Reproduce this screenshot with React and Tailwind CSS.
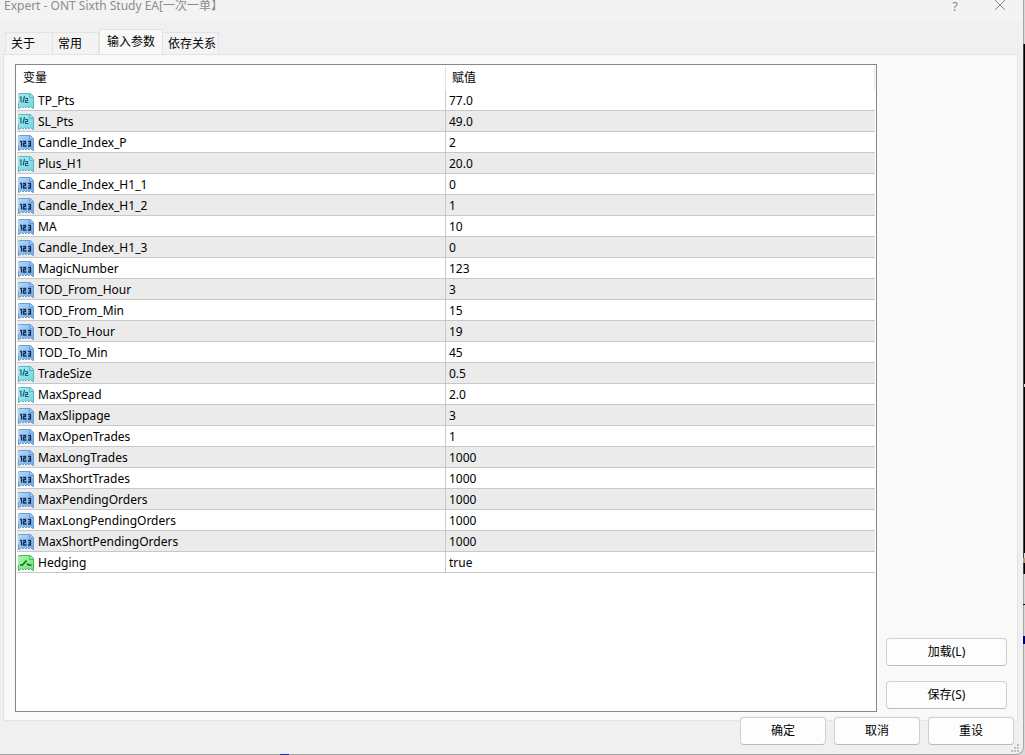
import React, { useState } from 'react'
import clsx from 'clsx'

const TABS = [
  { id: 'about', label: '关于', width: 'w-12' },
  { id: 'common', label: '常用', width: 'w-[46px]' },
  { id: 'inputs', label: '输入参数', width: 'w-16' },
  { id: 'deps', label: '依存关系', width: 'w-14' },
]

const INPUTS = [
  { name: 'TP_Pts', value: '77.0', type: 'double' },
  { name: 'SL_Pts', value: '49.0', type: 'double' },
  { name: 'Candle_Index_P', value: '2', type: 'int' },
  { name: 'Plus_H1', value: '20.0', type: 'double' },
  { name: 'Candle_Index_H1_1', value: '0', type: 'int' },
  { name: 'Candle_Index_H1_2', value: '1', type: 'int' },
  { name: 'MA', value: '10', type: 'int' },
  { name: 'Candle_Index_H1_3', value: '0', type: 'int' },
  { name: 'MagicNumber', value: '123', type: 'int' },
  { name: 'TOD_From_Hour', value: '3', type: 'int' },
  { name: 'TOD_From_Min', value: '15', type: 'int' },
  { name: 'TOD_To_Hour', value: '19', type: 'int' },
  { name: 'TOD_To_Min', value: '45', type: 'int' },
  { name: 'TradeSize', value: '0.5', type: 'double' },
  { name: 'MaxSpread', value: '2.0', type: 'double' },
  { name: 'MaxSlippage', value: '3', type: 'int' },
  { name: 'MaxOpenTrades', value: '1', type: 'int' },
  { name: 'MaxLongTrades', value: '1000', type: 'int' },
  { name: 'MaxShortTrades', value: '1000', type: 'int' },
  { name: 'MaxPendingOrders', value: '1000', type: 'int' },
  { name: 'MaxLongPendingOrders', value: '1000', type: 'int' },
  { name: 'MaxShortPendingOrders', value: '1000', type: 'int' },
  { name: 'Hedging', value: 'true', type: 'bool' },
]

const ICON_COLORS = {
  int: { light: '#b8dcfc', dark: '#6ea6e2', edge: '#6b9fd6', ink: '#12305c' },
  double: { light: '#a9eef5', dark: '#74d2df', edge: '#5cb6c4', ink: '#1c6674' },
  bool: { light: '#aaf8aa', dark: '#72de7a', edge: '#4dbb59', ink: '#14651f' },
}

// Torn-paper tag, the mark on it tells the variable's type
function TypeIcon({ type }) {
  const c = ICON_COLORS[type]
  return (
    <svg className="h-4 w-4 shrink-0" viewBox="0 0 16 16" fill="none" aria-hidden="true">
      <defs>
        <linearGradient id={`tag-${type}`} x1="0" y1="0" x2="1" y2="1">
          <stop offset="0" stopColor={c.light} />
          <stop offset="1" stopColor={c.dark} />
        </linearGradient>
      </defs>
      <path
        d="M1.5 .5h11l3 3v12l-1.5-.5-1.5-1.5-1.5 1.5-1.5-1.5-1.5 1.5-1.5-1.5-1.5 1.5-1.5-1.5-1.5 1.5-1.5.5v-5l-1-1v-8z"
        fill={`url(#tag-${type})`}
        stroke={c.edge}
      />
      <path d="M11.5 1v3.5h3.5" stroke={c.edge} />
      {type === 'int' && (
        <path
          d="M2 6.5h1.5v5M5 6.5h2.5v2h-2v2.5h3M10 6.5h2.5v5M10 11h3M10.5 8.8h2"
          stroke={c.ink}
          strokeWidth="1.3"
        />
      )}
      {type === 'double' && (
        <path
          d="M1.5 4h1.5v5.5M6.5 3l-1.5 6.5M7 5.5h2.5v2h-2v2h3"
          stroke={c.ink}
          strokeWidth="1.2"
        />
      )}
      {type === 'bool' && (
        <path d="M2 10h2.5l4-4.5M9 8.5l1.5 1.5h3" stroke={c.ink} strokeWidth="1.5" />
      )}
    </svg>
  )
}

function TitleBar() {
  return (
    <header className="flex h-[21px] shrink-0 items-start bg-[#f3f3f3] pl-1 pr-[17px] text-[#8c8c8c]">
      <h1 className="flex-1 text-[12px] leading-3">Expert - ONT Sixth Study EA[一次一单】</h1>
      <button aria-label="帮助" className="mr-9 text-[13px] leading-3">?</button>
      <button aria-label="关闭" className="h-3">
        <svg className="h-3 w-3" viewBox="0 0 12 12" fill="none" stroke="currentColor">
          <path d="M1 0l10 10M11 0L1 10" />
        </svg>
      </button>
    </header>
  )
}

function Tab({ label, width, active, onClick }) {
  return (
    <button
      role="tab"
      aria-selected={active}
      onClick={onClick}
      className={clsx(
        'border-t border-r border-[#e3e3e3] text-left text-[12px] first:border-l',
        width,
        active ? 'h-[25px] border-l bg-[#f9f9f9] pl-[7px]' : 'h-[22px] bg-[#f3f3f3] pl-[5px]'
      )}
    >
      {label}
    </button>
  )
}

function InputsTable() {
  return (
    <div className="min-w-0 flex-1 border border-[#828790] bg-white px-px pt-px">
      <table className="w-full table-fixed border-separate border-spacing-0 text-[12px] leading-4">
        <thead>
          <tr className="h-6 text-left">
            <th className="border-r border-[#e5e5e5] p-0 pl-1.5 font-normal">变量</th>
            <th className="border-r border-[#e5e5e5] p-0 pl-1.5 font-normal">赋值</th>
          </tr>
        </thead>
        <tbody>
          {INPUTS.map((row) => (
            <tr key={row.name} className="h-[21px] even:bg-[#ebebeb]">
              <td className="border-b border-r border-[#c8c8c8] p-0">
                <div className="flex h-5 items-end gap-1 pb-px pl-px">
                  <TypeIcon type={row.type} />
                  <span>{row.name}</span>
                </div>
              </td>
              <td className="border-b border-[#c8c8c8] p-0 pl-[3px] pt-0.5">{row.value}</td>
            </tr>
          ))}
        </tbody>
      </table>
    </div>
  )
}

function PushButton({ className, children }) {
  return (
    <button
      className={clsx(
        'h-7 rounded border border-[#d0d0d0] border-b-[#bcbcbc] bg-[#fdfdfd] text-[12px] hover:bg-[#e5f1fb]',
        className
      )}
    >
      {children}
    </button>
  )
}

function ResizeGrip() {
  return (
    <svg className="absolute bottom-0.5 right-1 h-2 w-2" viewBox="0 0 8 8" fill="#bfbfbf" aria-hidden="true">
      <path d="M6 0h2v2h-2zM3 3h2v2h-2zM6 3h2v2h-2zM0 6h2v2h-2zM3 6h2v2h-2zM6 6h2v2h-2z" />
    </svg>
  )
}

// Sliver of the chart window that shows past the dialog's edge
function ChartEdge() {
  return (
    <div className="z-10 -ml-px flex w-0.5 shrink-0 flex-col">
      <div className="h-11" />
      <div className="h-[340px] border-l border-[#444] bg-black" />
      <div className="h-[3px] border-l border-[#444] bg-[#d8d8d8]" />
      <div className="h-[166px] border-l border-[#444] bg-black" />
      <div className="h-[5px] border-l border-[#444]" />
      <div className="h-[5px] bg-[#b99a70]" />
      <div className="h-[11px] border-l border-[#444] bg-black" />
      <div className="h-[30px]" />
      <div className="h-px bg-black" />
      <div className="h-[31px]" />
      <div className="h-2 bg-[#00007a]" />
    </div>
  )
}

export default function App() {
  const [tab, setTab] = useState('inputs')

  return (
    <div className="flex h-screen bg-[#d8d8d8] font-['Noto_Sans','Noto_Sans_CJK_SC',sans-serif] text-black">
      <div className="relative flex min-w-0 flex-1 flex-col rounded-br-lg border-b border-r border-[#a6a6a6] bg-[#f0f0f0]">
        <TitleBar />

        <div role="tablist" className="flex h-[33px] shrink-0 items-end pl-[5px]">
          {TABS.map((t) => (
            <Tab key={t.id} {...t} active={tab === t.id} onClick={() => setTab(t.id)} />
          ))}
        </div>

        <main className="ml-[3px] mr-[5px] flex min-h-0 flex-1 gap-[9px] border border-[#e3e3e3] bg-[#f9f9f9] pb-2 pl-[11px] pr-[10px] pt-[9px]">
          <InputsTable />
          <div className="flex w-[121px] shrink-0 flex-col justify-end gap-[15px] pb-[3px]">
            <PushButton>加载(L)</PushButton>
            <PushButton>保存(S)</PushButton>
          </div>
        </main>

        <footer className="z-10 -mt-1 flex shrink-0 justify-end gap-2 pb-[9px] pr-[9px]">
          <PushButton className="w-[86px] ring-1 ring-[#f0f0f0]">确定</PushButton>
          <PushButton className="w-[86px] ring-1 ring-[#f0f0f0]">取消</PushButton>
          <PushButton className="w-[86px] ring-1 ring-[#f0f0f0]">重设</PushButton>
        </footer>

        <ResizeGrip />
        {/* chart marker peeking out below the dialog */}
        <div className="absolute -bottom-px left-[280px] h-px w-[9px] bg-[#2a2a90]" />
      </div>
      <ChartEdge />
    </div>
  )
}
